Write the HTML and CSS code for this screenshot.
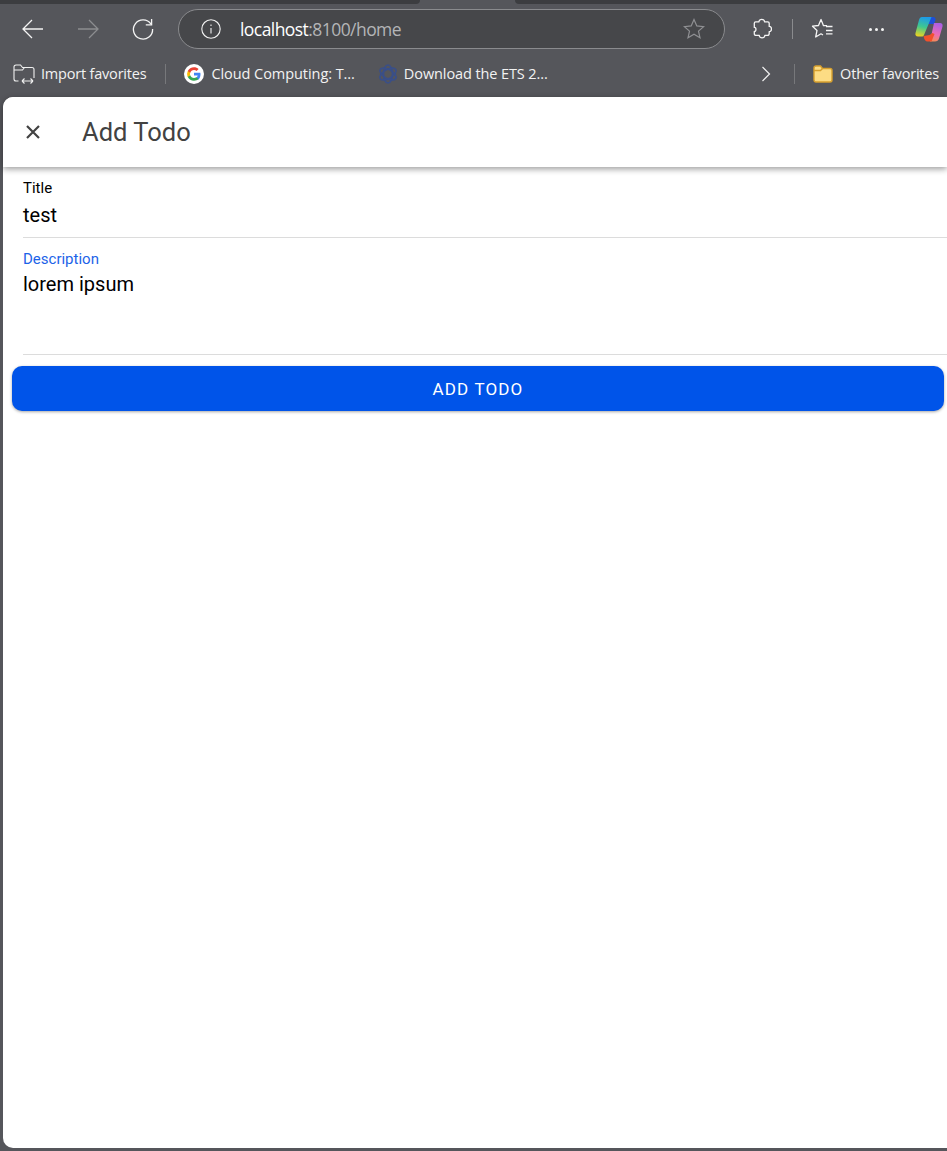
FILE: index.html
```html
<!DOCTYPE html>
<html lang="en">
<head>
<meta charset="utf-8">
<title>Add Todo</title>
<link rel="stylesheet" href="styles.css">
</head>
<body>
<div class="browser">
  <div class="tabstrip"><div class="tab-dark tab-left"></div><div class="tab-gap"></div><div class="tab-dark tab-right"></div></div>
  <div class="toolbar">
    <svg class="nav-icon" width="24" height="24" viewBox="0 0 24 24" fill="none" stroke="#f4f4f4" stroke-width="1.3"><path d="M2 12h20M11 3l-9 9 9 9"/></svg>
    <svg class="nav-icon" width="24" height="24" viewBox="0 0 24 24" fill="none" stroke="#8c8d90" stroke-width="1.3"><path d="M2 12h20M13 3l9 9-9 9"/></svg>
    <svg class="nav-icon" width="24" height="24" viewBox="0 0 24 24" fill="none" stroke="#f4f4f4" stroke-width="1.3"><path d="M20 7.200A9.600 9.600 0 1 0 21.600 12"/><path d="M20.600 2v5.800h-5.800"/></svg>
    <div class="address">
      <svg width="20" height="20" viewBox="0 0 20 20" fill="none" stroke="#f2f2f2" stroke-width="1.100"><circle cx="10" cy="10" r="9.200"/><path d="M10 9v5.500M10 5.600v1.400"/></svg>
      <span class="url"><span class="host">localhost</span>:8100/home</span>
      <svg class="star" width="22" height="22" viewBox="0 0 22 22" fill="none" stroke="#8f9093" stroke-width="1.200"><path d="M11 1.600l2.800 6.300 6.800.7-5.100 4.500 1.500 6.700-6-3.500-6 3.500 1.500-6.700L1.400 8.600l6.800-.7z"/></svg>
    </div>
    <svg class="puzzle" width="20" height="22" viewBox="0 0 20 22" fill="none" stroke="#f4f4f4" stroke-width="1.300" stroke-linejoin="round"><path d="M7 3.800C6.800.6 12.700.6 12.500 3.800h3.300c.8 0 1.400.6 1.400 1.400v3.200c3-.2 3 5.400 0 5.200v1.900c0 1.200-.7 1.900-1.900 1.900h-2.500c.2 3.300-5.600 3.300-5.500 0H4c-1 0-1.700-.7-1.700-1.700v-2.200c2.200.3 2.200-4.500 0-4.200V5.200c0-.8.600-1.400 1.400-1.400z"/></svg>
    <div class="bar-sep"></div>
    <svg class="favs" width="24" height="22" viewBox="0 0 24 22" fill="none" stroke="#f4f4f4" stroke-width="1.300" stroke-linejoin="round"><path d="M16 7.700h-3.500L10 1.500 7.500 7.500l-6 .7 4.500 4.200-1.300 6.600 5.300-3.200 2 1.200"/><path d="M15 8.500h6.500M15 12.500h6.500M15 15.800h6.500"/></svg>
    <div class="dots"><i></i><i></i><i></i></div>
    <svg class="copilot" width="28" height="26" viewBox="0 0 28 26">
      <defs>
        <linearGradient id="cpa" x1="0.500" y1="0" x2="0.300" y2="1"><stop offset="0" stop-color="#1d9be8"/><stop offset=".5" stop-color="#3fc88f"/><stop offset="1" stop-color="#ecd321"/></linearGradient>
        <linearGradient id="cpb" x1="0.600" y1="0" x2="0.400" y2="1"><stop offset="0" stop-color="#a85ee6"/><stop offset=".6" stop-color="#ec6cb4"/><stop offset="1" stop-color="#f58a5c"/></linearGradient>
      </defs>
      <path d="M14 1h4c2 0 3 1.500 2.500 3L19 8h-7z" fill="#1d4fd8"/>
      <path d="M7 1h9.500L9 19c-.5 1-1 1.500-2.500 1.500H3C1 20.500 0 19 .5 17L4 4c.5-2 1.500-3 3-3z" fill="url(#cpa)"/>
      <path d="M19 7h6c2 0 3 1.500 2.500 3.500l-3.500 12c-.5 2-2 3-4 3h-5z" fill="url(#cpb)"/>
      <path d="M8.500 20l6-1 3-2 2 1-3 7.500h-4c-2 0-3.500-2-4-5.500z" fill="#f2502c"/>
    </svg>
  </div>
  <div class="favbar">
    <div class="fav fav-import">
      <svg width="22" height="20" viewBox="0 0 22 20" fill="none" stroke="#f0f0f0" stroke-width="1.100"><path d="M5.500 17H3a2 2 0 0 1-2-2V3a2 2 0 0 1 2-2h4.500l2 2.500H19a2 2 0 0 1 2 2V14"/><path d="M1 6h8.500l2-2.500M9 17h11M9 17l2.500-2.500M9 17l2.500 2.500M20 17l-2.500-2.500M20 17l-2.500 2.500"/></svg>
      <span>Import favorites</span>
    </div>
    <div class="fav-sep"></div>
    <div class="fav fav-google">
      <svg width="20" height="20" viewBox="0 0 20 20"><circle cx="10" cy="10" r="10" fill="#fff"/><path d="M16.500 10.200c0-.5-.1-1-.2-1.500H10v2.800h3.700c-.2.900-.7 1.600-1.400 2.100v1.800h2.300c1.200-1.200 1.900-3 1.900-5.200z" fill="#4285f4"/><path d="M10 16.800c1.800 0 3.400-.6 4.600-1.700l-2.300-1.800c-.6.400-1.400.7-2.300.7-1.800 0-3.300-1.200-3.800-2.800H3.800v1.800c1.100 2.300 3.500 3.800 6.200 3.800z" fill="#34a853"/><path d="M6.200 11.200c-.3-.8-.3-1.600 0-2.400V7H3.800a6.800 6.800 0 0 0 0 6z" fill="#fbbc05"/><path d="M10 5.900c1 0 1.900.3 2.600 1l2-2C13.400 3.800 11.800 3.200 10 3.200 7.300 3.200 4.900 4.700 3.800 7l2.400 1.800C6.700 7.100 8.200 5.900 10 5.900z" fill="#ea4335"/></svg>
      <span>Cloud Computing: T...</span>
    </div>
    <div class="fav fav-ets">
      <svg width="20" height="20" viewBox="0 0 20 20" fill="none" stroke="#3a4f88" stroke-width="1.700"><ellipse cx="10" cy="10" rx="4.500" ry="9"/><ellipse cx="10" cy="10" rx="4.500" ry="9" transform="rotate(60 10 10)"/><ellipse cx="10" cy="10" rx="4.500" ry="9" transform="rotate(-60 10 10)"/></svg>
      <span>Download the ETS 2...</span>
    </div>
    <svg class="chev" width="10" height="16" viewBox="0 0 10 16" fill="none" stroke="#f0f0f0" stroke-width="1.200"><path d="M1.500 1l7 7-7 7"/></svg>
    <div class="fav-sep fav-sep-right"></div>
    <div class="fav fav-other">
      <svg width="20" height="18" viewBox="0 0 20 18"><path d="M1 3a2 2 0 0 1 2-2h4.500l2 2.500H17a2 2 0 0 1 2 2V15a2 2 0 0 1-2 2H3a2 2 0 0 1-2-2z" fill="#fcdc84" stroke="#d7a02e" stroke-width="1.400"/><path d="M1 5.500h6.500l2-2" fill="none" stroke="#d7a02e" stroke-width="1.400"/></svg>
      <span>Other favorites</span>
    </div>
  </div>
</div>
<main class="app">
  <header class="app-header">
    <svg class="close" width="14" height="14" viewBox="0 0 14 14" fill="none" stroke="#424242" stroke-width="2.200"><path d="M1 1l12 12M13 1L1 13"/></svg>
    <h1 class="app-title">Add Todo</h1>
  </header>
  <form class="form">
    <div class="field field-title">
      <label class="label">Title</label>
      <div class="value">test</div>
    </div>
    <div class="field field-desc">
      <label class="label label-active">Description</label>
      <div class="value">lorem ipsum</div>
    </div>
    <button type="button" class="submit">ADD TODO</button>
  </form>
</main>
</body>
</html>
```

FILE: styles.css
```css
* { box-sizing: border-box; }
html, body { margin: 0; height: 100%; }
body {
  width: 947px;
  height: 1151px;
  overflow: hidden;
  background: #55565b;
  font-family: "Roboto", sans-serif;
}

/* browser chrome */
.browser { height: 97px; font-family: "Open Sans", sans-serif; color: #f2f2f2; }
.tabstrip { height: 4px; display: flex; background: #55565b; }
.tab-dark { height: 4px; background: #3c3d40; }
.tab-left { width: 420px; border-bottom-right-radius: 4px; }
.tab-gap { width: 95px; }
.tab-right { flex: 1; border-bottom-left-radius: 4px; }
.toolbar { height: 50px; display: flex; align-items: center; }
.nav-icon { margin-left: 21px; margin-right: 10px; flex: none; }
.nav-icon:nth-child(3) { margin-right: 24px; }
.address {
  width: 547px;
  height: 40px;
  margin-left: -1px;
  flex: none;
  display: flex;
  align-items: center;
  padding-left: 22px;
  border: 1px solid #8a8b8e;
  border-radius: 20px;
  background: #46474a;
}
.url { margin-left: 19px; font-size: 17.500px; letter-spacing: -0.560px; color: #b4b5b7; }
.host { color: #fff; }
.star { margin-left: auto; margin-right: 19px; }
.puzzle { margin-left: 27px; flex: none; }
.bar-sep { width: 1px; height: 20px; margin-left: 20px; background: #8a8b8e; flex: none; }
.favs { margin-left: 18px; flex: none; }
.dots { margin-left: 34px; display: flex; gap: 3px; flex: none; }
.dots i { display: block; width: 3px; height: 3px; border-radius: 50%; background: #f4f4f4; }
.copilot { margin-left: 31px; flex: none; }

.favbar { height: 43px; padding-bottom: 4px; display: flex; align-items: center; font-size: 14.500px; letter-spacing: -0.200px; }
.fav { display: flex; align-items: center; white-space: nowrap; flex: none; }
.fav-import { margin-left: 13px; gap: 6px; }
.fav-sep { width: 1px; height: 20px; margin-left: 19px; background: #77787b; flex: none; }
.fav-google { margin-left: 18px; gap: 7px; letter-spacing: -0.060px; }
.fav-ets { margin-left: 23px; gap: 6px; letter-spacing: -0.100px; }
.chev { margin-left: auto; flex: none; }
.fav-sep-right { margin-left: 23px; }
.fav-other { margin-left: 18px; margin-right: 8px; gap: 7px; }

/* app */
.app {
  margin-left: 3px;
  height: 1051px;
  background: #fff;
  border-radius: 10px 0 0 10px;
}
.app-header {
  height: 70px;
  display: flex;
  align-items: center;
  border-radius: 10px 0 0 0;
  background: #fff;
  box-shadow: 0 2px 6px rgba(0, 0, 0, 0.4);
  position: relative;
}
.close { margin-left: 23px; flex: none; }
.app-title {
  margin: 0 0 0 42px;
  font-size: 25.500px;
  font-weight: 400;
  color: #424242;
}
.form { display: flex; flex-direction: column; }
.field { margin-left: 20px; border-bottom: 1px solid #dcdcdc; }
.field-title { height: 71px; padding-top: 13px; }
.field-desc { height: 117px; padding-top: 13px; }
.label { display: block; font-size: 15px; line-height: 16px; color: #000; }
.label-active { color: #1c63e8; }
.value { font-size: 20px; line-height: 24px; color: #000; margin-top: 7px; }
.field-desc .value { margin-top: 5px; }
.submit {
  width: 932px;
  height: 45px;
  margin: 11px 0 0 9px;
  padding: 0;
  border: 0;
  border-radius: 10px;
  background: #0054e9;
  color: #fff;
  font-family: "Roboto", sans-serif;
  font-size: 17px;
  font-weight: 450;
  letter-spacing: 1.150px;
  box-shadow: 0 1px 3px rgba(0, 0, 0, 0.35);
}
```
